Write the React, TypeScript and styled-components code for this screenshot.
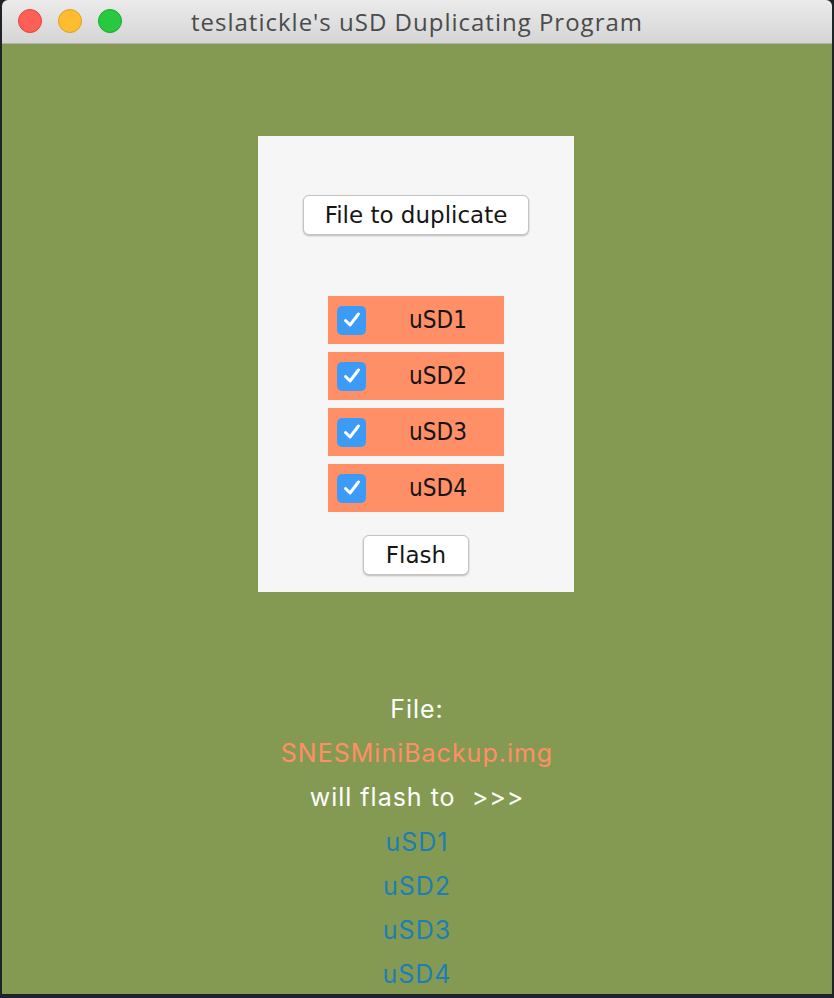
import React from 'react';
import styled, { createGlobalStyle } from 'styled-components';


const GlobalStyle = createGlobalStyle`
    html, body {
        margin: 0;
        padding: 0;
        background: #1d2327;
    }
`;

const Desktop = styled.div`
    width: 834px;
    height: 998px;
    padding-left: 2px;
    box-sizing: border-box;
    overflow: hidden;
`;

const Window = styled.div`
    width: 830px;
    display: flex;
    flex-direction: column;
    border-radius: 6px 6px 0 0;
    overflow: hidden;
`;

const TitleBar = styled.div`
    position: relative;
    height: 43px;
    display: flex;
    align-items: center;
    justify-content: center;
    background: linear-gradient(#ebebeb, #d5d5d5);
    border-bottom: 1px solid #b3b3b3;
    font-family: 'Open Sans', 'Liberation Sans', sans-serif;
    font-size: 24px;
    letter-spacing: 1px;
    color: #4b4b4b;
`;

const Lights = styled.div`
    position: absolute;
    left: 16px;
    top: 9px;
    display: flex;
    gap: 16px;
`;

const Light = styled.div<{ $fill : string; $edge : string }>`
    width: 24px;
    height: 24px;
    border-radius: 50%;
    box-sizing: border-box;
    background: ${p => p.$fill};
    border: 1px solid ${p => p.$edge};
`;

const Content = styled.div`
    height: 950px;
    background: #849a52;
    display: flex;
    flex-direction: column;
    align-items: center;
`;

const Panel = styled.div`
    flex-shrink: 0;
    margin-top: 92px;
    margin-right: 2px;
    width: 316px;
    height: 456px;
    box-sizing: border-box;
    background: #f6f6f6;
    display: flex;
    flex-direction: column;
    align-items: center;
    padding-top: 59px;
    font-family: 'DejaVu Sans', sans-serif;
    font-stretch: condensed;
`;

const PushButton = styled.button<{ $width : number; $top ?: number }>`
    width: ${p => p.$width}px;
    height: 40px;
    margin-top: ${p => p.$top ?? 0}px;
    background: #ffffff;
    border: 1px solid #c4c4c4;
    border-radius: 6px;
    box-shadow: 0 1px 2px rgba(0, 0, 0, 0.25);
    font-family: inherit;
    font-size: 23px;
    color: #161616;
    padding: 0;
`;

const DriveList = styled.div`
    margin-top: 61px;
    display: flex;
    flex-direction: column;
    gap: 8px;
`;

const DriveRow = styled.label`
    width: 176px;
    height: 48px;
    background: #ff8f66;
    display: flex;
    align-items: center;
    padding-left: 9px;
    box-sizing: border-box;
`;

const Check = styled.span`
    width: 29px;
    height: 29px;
    border-radius: 5px;
    background: #3d9bf8;
    display: flex;
    align-items: center;
    justify-content: center;
`;

const DriveName = styled.span`
    flex: 1;
    text-align: center;
    padding-left: 6px;
    font-size: 24px;
    color: #141414;
`;

const Summary = styled.div`
    flex-shrink: 0;
    margin-top: 95px;
    display: flex;
    flex-direction: column;
    align-items: center;
    font-family: 'Inter', 'Open Sans', sans-serif;
    font-size: 25px;
    letter-spacing: 1px;
    line-height: 44.2px;
`;

const Line = styled.div<{ $color : string }>`
    color: ${p => p.$color};
    white-space: pre;
`;

const drives = ['uSD1', 'uSD2', 'uSD3', 'uSD4'];

function CheckMark()
{
    return (
        <svg width="22" height="22" viewBox="0 0 22 22">
            <path d="M4.5 11.5 L9 16 L17.5 5" fill="none" stroke="#fff" strokeWidth="3" strokeLinecap="round" strokeLinejoin="round" />
        </svg>
    );
}

export default function App()
{
    return (
        <Desktop>
            <GlobalStyle />
            <Window>
                <TitleBar>
                    <Lights>
                        <Light $fill="#fe5f57" $edge="#e0443e" />
                        <Light $fill="#febc2e" $edge="#dea123" />
                        <Light $fill="#28c840" $edge="#1aab29" />
                    </Lights>
                    teslatickle's uSD Duplicating Program
                </TitleBar>
                <Content>
                    <Panel>
                        <PushButton $width={226}>File to duplicate</PushButton>
                        <DriveList>
                            {drives.map(d => (
                                <DriveRow key={d}>
                                    <Check><CheckMark /></Check>
                                    <DriveName>{d}</DriveName>
                                </DriveRow>
                            ))}
                        </DriveList>
                        <PushButton $width={106} $top={23}>Flash</PushButton>
                    </Panel>
                    <Summary>
                        <Line $color="#ffffff">File:</Line>
                        <Line $color="#ff8f66">SNESMiniBackup.img</Line>
                        <Line $color="#ffffff">will flash to  &gt;&gt;&gt;</Line>
                        {drives.map(d => (
                            <Line key={d} $color="#1c7eb4">{d}</Line>
                        ))}
                    </Summary>
                </Content>
            </Window>
        </Desktop>
    );
}
